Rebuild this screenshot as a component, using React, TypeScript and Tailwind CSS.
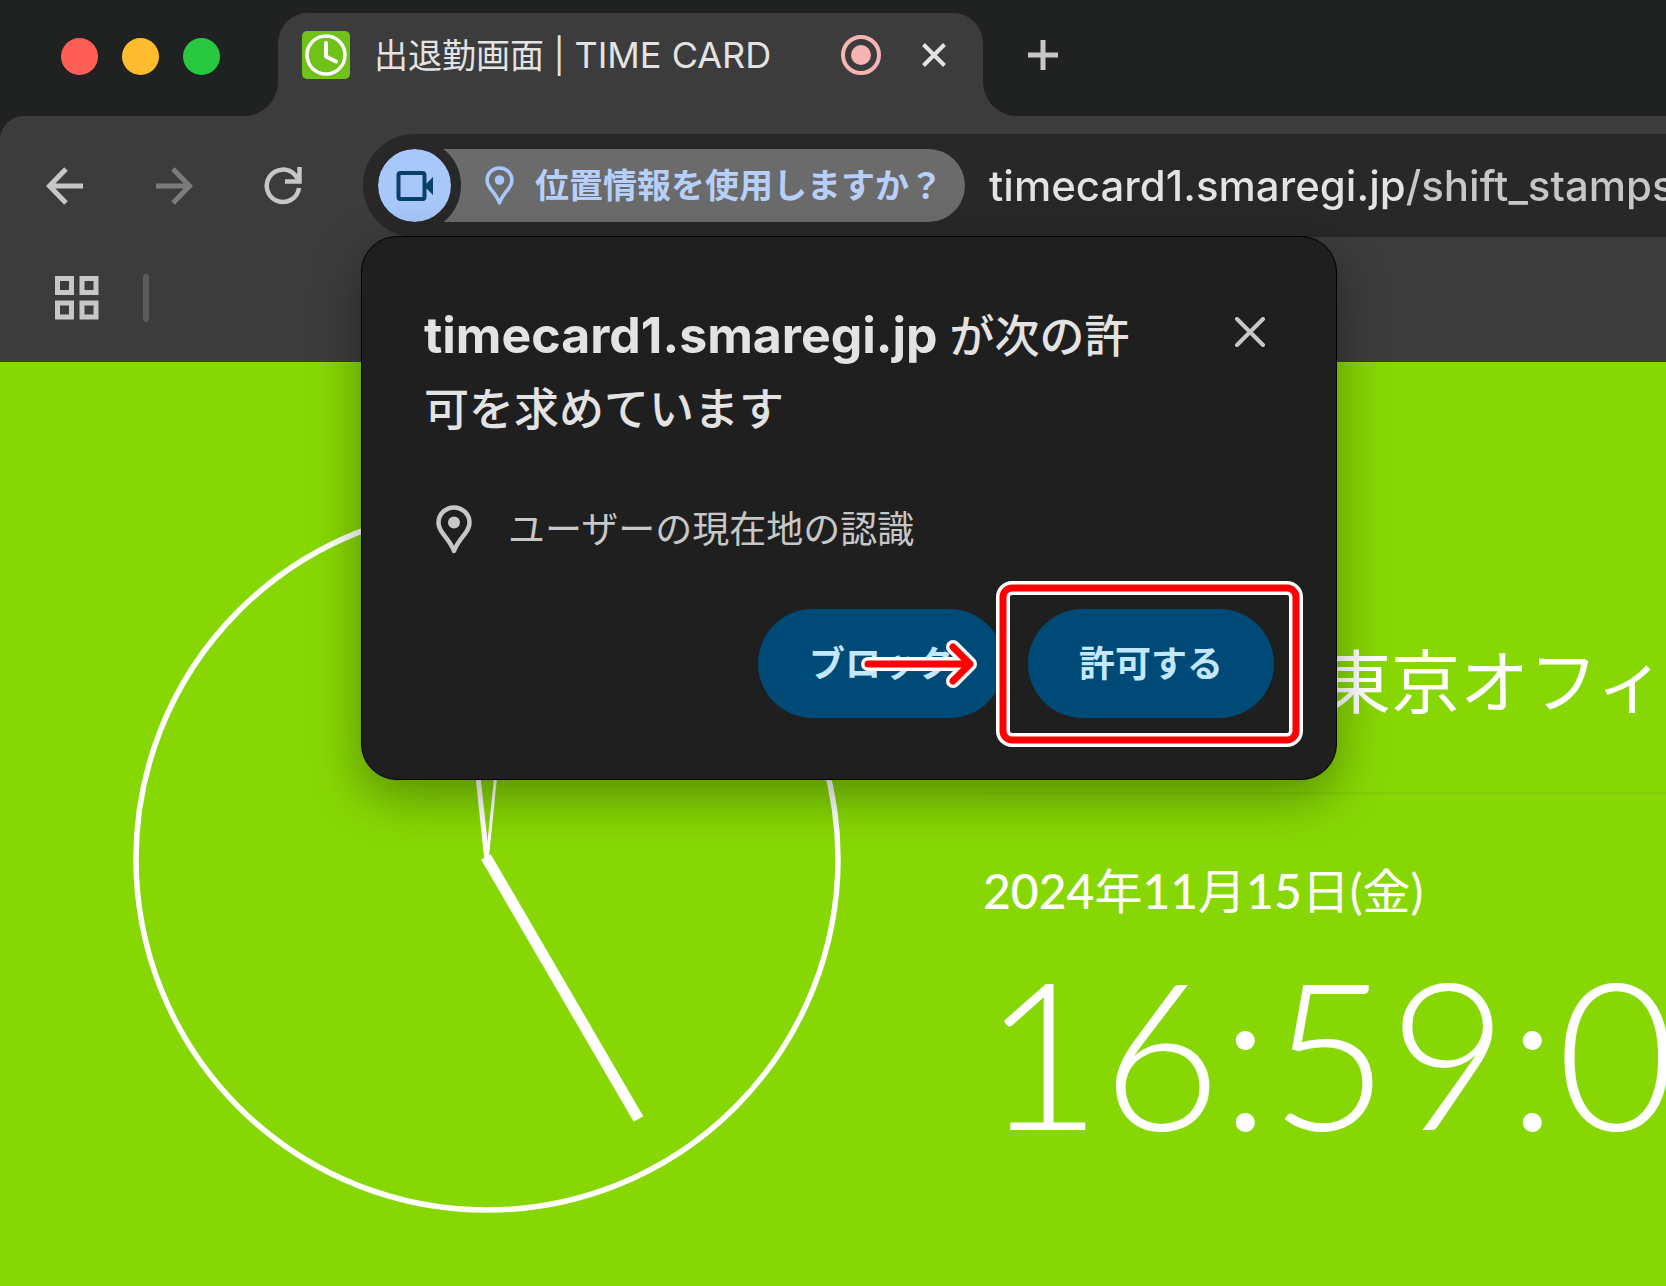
import { useState } from "react";

const ui = "font-['Inter','Noto_Sans_CJK_JP',sans-serif]";
const lato = "font-['Lato','Noto_Sans_CJK_JP',sans-serif]";

function Pin({ className }: { className: string }) {
  return (
    <svg viewBox="0 0 36 50" className={className} fill="none" aria-hidden="true">
      <path
        d="M18 2.500C9.400 2.500 2.500 9.300 2.500 17.600c0 4.600 2 8 4.800 11.600C11.500 34.600 15.400 39 18 46c2.600-7 6.500-11.400 10.700-16.800 2.800-3.600 4.800-7 4.800-11.600C33.500 9.300 26.600 2.500 18 2.500Z"
        stroke="currentColor"
        strokeWidth="4.500"
        strokeLinejoin="round"
      />
      <circle cx="18" cy="17.500" r="6" fill="currentColor" />
    </svg>
  );
}

function TabStrip() {
  return (
    <div className="flex h-[116px] bg-[#3c3c3c]">
      <div className="flex w-[278px] shrink-0 items-start gap-6 rounded-br-[34px] bg-[#202221] pt-[38px] pl-[61px]">
        <button aria-label="閉じる" className="size-[37px] rounded-full bg-[#ff5f57]" />
        <button aria-label="しまう" className="size-[37px] rounded-full bg-[#febc2e]" />
        <button aria-label="拡大" className="size-[37px] rounded-full bg-[#28c840]" />
      </div>

      <div className="w-[705px] shrink-0 bg-[linear-gradient(#202221_50%,#3c3c3c_50%)] pt-[13px]">
        <div className="flex h-full items-start rounded-t-[30px] bg-[#3c3c3c] pt-[18px] pr-[37px] pl-6">
          <svg viewBox="0 0 48 48" className="mr-6 size-12 shrink-0" fill="none" aria-hidden="true">
            <rect width="48" height="48" rx="5" fill="#70c118" />
            <circle cx="24" cy="24" r="19" stroke="#fff" strokeWidth="3.500" />
            <path d="M24 12v13.500l10 5" stroke="#fff" strokeWidth="4" strokeLinecap="round" strokeLinejoin="round" />
          </svg>
          <h1 className="flex-1 text-[34px] leading-12 whitespace-nowrap text-[#e3e3e3]">
            出退勤画面 | <span className="text-[36px]">TIME CARD</span>
          </h1>
          <svg viewBox="0 0 40 40" className="mt-1 mr-[41px] size-10" fill="none" aria-hidden="true">
            <circle cx="20" cy="20" r="18" stroke="#f6b5b3" strokeWidth="4" />
            <circle cx="20" cy="20" r="10" fill="#f6b5b3" />
          </svg>
          <button aria-label="タブを閉じる" className="mt-3 text-[#e3e3e3]">
            <svg viewBox="0 0 24 24" className="size-6" stroke="currentColor" strokeWidth="4">
              <path d="M1.500 1.500l21 21M22.500 1.500l-21 21" />
            </svg>
          </button>
        </div>
      </div>

      <div className="flex flex-1 items-start rounded-bl-[34px] bg-[#202221] pt-10 pl-[45px]">
        <button aria-label="新しいタブ" className="text-[#c7c7c7]">
          <svg viewBox="0 0 30 30" className="size-[30px]" stroke="currentColor" strokeWidth="5">
            <path d="M15 0v30M0 15h30" />
          </svg>
        </button>
      </div>
    </div>
  );
}

function Toolbar() {
  const [url, setUrl] = useState("timecard1.smaregi.jp/shift_stamps");

  return (
    <div className="bg-[#202221]">
      <div className="flex items-center rounded-tl-[24px] bg-[#3c3c3c] pt-[18px] pl-[46px]">
        <button aria-label="戻る" className="mr-[71px] text-[#c7c7c7]">
          <svg viewBox="0 0 38 38" className="size-[38px]" fill="none" stroke="currentColor" strokeWidth="5">
            <path d="M37 19H4M20 2L3.500 19 20 36" />
          </svg>
        </button>
        <button aria-label="進む" className="mr-[71px] text-[#7b7b7b]">
          <svg viewBox="0 0 38 38" className="size-[38px]" fill="none" stroke="currentColor" strokeWidth="5">
            <path d="M1 19h33M18 2l16.500 17L18 36" />
          </svg>
        </button>
        <button aria-label="再読み込み" className="mr-[61px] text-[#c7c7c7]">
          <svg viewBox="0 0 38 38" className="size-[38px]" fill="none" stroke="currentColor" strokeWidth="4.500">
            <path d="M35 21A16.200 16.200 0 1 1 31 8l4 5.500" />
            <path d="M35.500 0v14.500H21" />
          </svg>
        </button>

        <div className="flex h-[103px] flex-1 items-center overflow-hidden rounded-l-full bg-[#282828] pl-[15px]">
          <div className="flex h-[73px] w-[587px] shrink-0 items-center rounded-full bg-[#6b6b6b] text-[#a8c7fa]">
            <button
              aria-label="カメラ"
              className="flex size-[73px] shrink-0 items-center justify-center rounded-full bg-[#a8c7fa] text-[#0b4066] outline-10 outline-[#282828]"
            >
              <svg viewBox="0 0 38 32" className="h-8 w-[38px]" fill="none" aria-hidden="true">
                <rect x="2.500" y="3" width="26" height="26" rx="2" stroke="currentColor" strokeWidth="4" />
                <path d="M28 16l9-9v18z" fill="currentColor" />
              </svg>
            </button>
            <Pin className="ml-[34px] h-10 w-[29px] shrink-0" />
            <span className="ml-[21px] text-[34px] font-bold whitespace-nowrap text-[#b7d0fb]">位置情報を使用しますか？</span>
          </div>
          <input
            type="text"
            aria-label="アドレス"
            value={url}
            onChange={(e) => setUrl(e.target.value)}
            className="ml-6 w-0 flex-1 bg-[linear-gradient(90deg,#e3e3e3_415px,#c7c7c7_415px)] bg-clip-text text-[42px] font-medium text-transparent outline-none"
          />
        </div>
      </div>
    </div>
  );
}

function Bookmarks() {
  return (
    <div className="flex h-[125px] items-center bg-[#3c3c3c] pb-1 pl-[55px]">
      <button aria-label="アプリ" className="text-[#c7c7c7]">
        <svg viewBox="0 0 44 44" className="size-11" fill="none" stroke="currentColor" strokeWidth="5">
          <path d="M2.500 2.500h14v14h-14zM27 2.500h14v14H27zM2.500 27h14v14h-14zM27 27h14v14H27z" />
        </svg>
      </button>
      <span className="ml-11 h-12 w-[6px] rounded-full bg-[#5c5c5c]" />
    </div>
  );
}

function Permission() {
  return (
    <section
      role="dialog"
      aria-labelledby="ask"
      className="absolute top-[236px] left-[361px] w-[976px] rounded-[36px] border border-black bg-[#1f1f1f] px-[62px] pt-[62px] pb-[61px] shadow-[0_16px_50px_rgba(0,0,0,0.35)]"
    >
      <div className="flex items-start justify-between">
        <h2 id="ask" className="w-[720px] text-[45px] leading-[73px] font-medium text-[#e3e3e3]">
          <b className="text-[50px] font-bold">timecard1.smaregi.jp</b> が次の許
          <br />
          可を求めています
        </h2>
        <button aria-label="閉じる" className="mt-[18px] mr-[9px] text-[#c7c7c7]">
          <svg viewBox="0 0 30 30" className="size-[30px]" stroke="currentColor" strokeWidth="4" strokeLinecap="round">
            <path d="M2 2l26 26M28 2L2 28" />
          </svg>
        </button>
      </div>

      <p className="mt-[57px] ml-3 flex items-center gap-9 text-[37px] leading-[54px] text-[#c7c7c7]">
        <Pin className="h-[50px] w-9" />
        ユーザーの現在地の認識
      </p>

      <div className="mt-[52px] flex justify-end gap-6 text-[36px] font-bold text-[#c2e7ff]">
        <button className="h-[109px] w-[246px] rounded-full bg-[#004a77]">ブロック</button>
        <button className="h-[109px] w-[246px] rounded-full bg-[#004a77]">許可する</button>
      </div>

      {/* callout around the allow button */}
      <svg viewBox="0 0 448 166" className="absolute right-[33px] bottom-8 h-[166px] w-[448px]" fill="none" aria-hidden="true">
        <g strokeLinecap="round" strokeLinejoin="round">
          <path d="M13 83h101M98 66l17 17-17 17" stroke="#fff" strokeWidth="14" />
          <path d="M13 83h101M98 66l17 17-17 17" stroke="#f00" strokeWidth="7" />
        </g>
        <rect x="148" y="7" width="293" height="152" rx="9" stroke="#fff" strokeWidth="14" />
        <rect x="148" y="7" width="293" height="152" rx="9" stroke="#f00" strokeWidth="7" />
      </svg>
    </section>
  );
}

function TimeCard() {
  return (
    <main className={`flex flex-1 bg-[#87d704] text-white ${lato}`}>
      <svg viewBox="0 0 708 708" className="mt-[143px] ml-[133px] size-[708px] shrink-0" fill="none" stroke="#fff" role="img" aria-label="時計">
        <circle cx="354" cy="354" r="351" strokeWidth="5.500" />
        <path d="M354 356L327 101" strokeWidth="5" />
        <path d="M354 356L380 101" strokeWidth="3" />
        <path d="M353 352l152.500 262" strokeWidth="11" />
      </svg>

      <div className="ml-[142px] min-w-0 flex-1 overflow-hidden">
        <p className="mt-[265px] ml-[339px] text-[69px] leading-[110px] whitespace-nowrap">東京オフィス</p>
        <hr className="mt-[55px] border-t-3 border-[#81cf04]" />
        <p className="mt-[61px] text-[48px] leading-[70px] font-medium whitespace-nowrap">
          2024<span className="font-normal">年</span>11<span className="font-normal">月</span>15
          <span className="font-normal">日(金)</span>
        </p>
        <p className="text-[205px] leading-[250px] font-light whitespace-nowrap">16:59:00</p>
      </div>
    </main>
  );
}

export default function App() {
  return (
    <div className={`relative flex min-h-screen flex-col overflow-hidden ${ui}`}>
      <header>
        <TabStrip />
        <Toolbar />
        <Bookmarks />
      </header>
      <TimeCard />
      <Permission />
    </div>
  );
}
